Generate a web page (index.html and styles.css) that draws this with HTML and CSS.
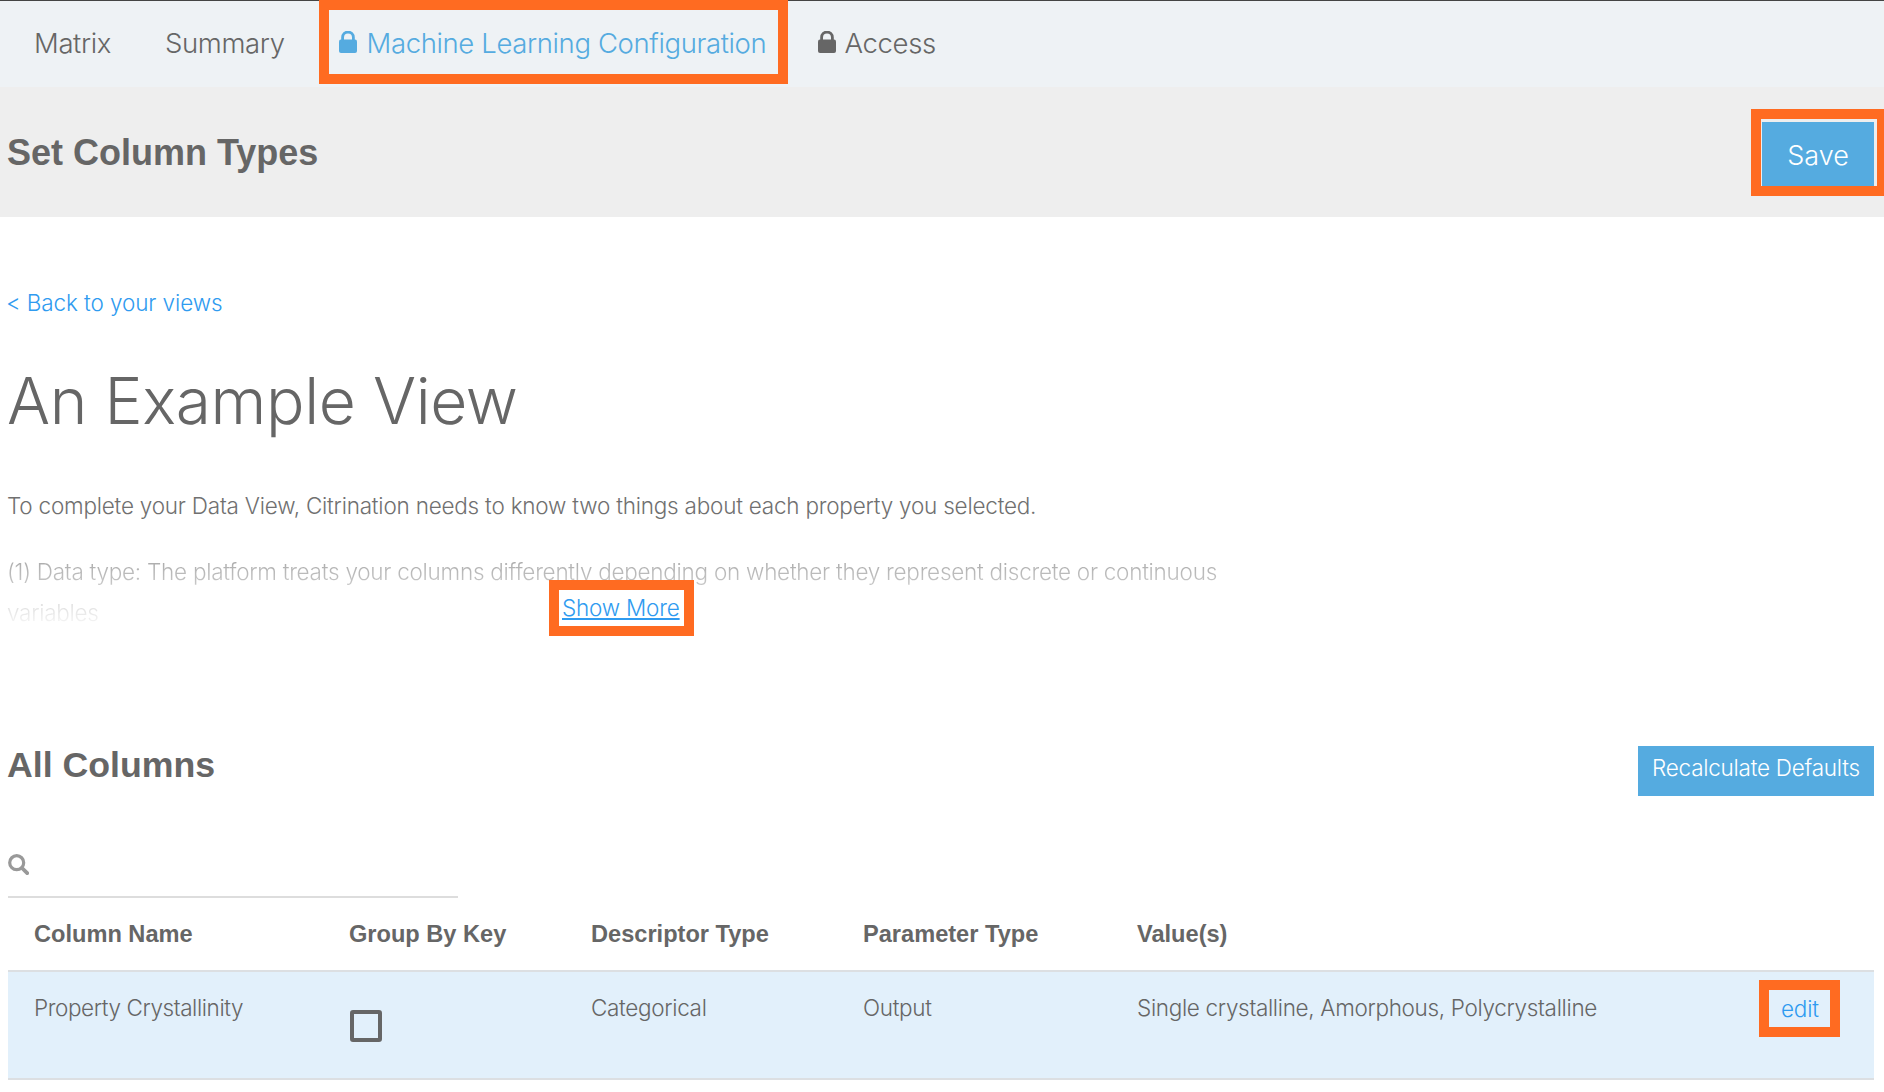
FILE: index.html
```html
<!DOCTYPE html>
<html lang="en">
<head>
<meta charset="utf-8">
<title>Set Column Types</title>
<link rel="stylesheet" href="styles.css">
</head>
<body>
<nav class="tabs">
  <a class="tab tab-matrix">Matrix</a>
  <a class="tab tab-summary">Summary</a>
  <div class="mark mark-tab">
    <a class="tab tab-active">
      <svg class="lock" viewBox="0 0 18 22" aria-hidden="true"><path d="M3.6 10V6.4a5.4 5.4 0 0 1 10.8 0V10" fill="none" stroke="currentColor" stroke-width="2.8"/><rect x="0" y="8.5" width="18" height="13.5" rx="2" fill="currentColor"/></svg>
      Machine Learning Configuration
    </a>
  </div>
  <a class="tab tab-access">
    <svg class="lock" viewBox="0 0 18 22" aria-hidden="true"><path d="M3.6 10V6.4a5.4 5.4 0 0 1 10.8 0V10" fill="none" stroke="currentColor" stroke-width="2.8"/><rect x="0" y="8.5" width="18" height="13.5" rx="2" fill="currentColor"/></svg>
    Access
  </a>
</nav>

<header class="subheader">
  <h2 class="section-title">Set Column Types</h2>
  <div class="mark mark-save"><button class="btn btn-save">Save</button></div>
</header>

<main class="content">
  <a class="back-link">&lt; Back to your views</a>
  <h1 class="page-title">An Example View</h1>
  <p class="lead">To complete your Data View, Citrination needs to know two things about each property you selected.</p>
  <div class="more-wrap">
    <p class="faded">(1) Data type: The platform treats your columns differently depending on whether they represent discrete or continuous variables</p>
    <div class="mark mark-more"><a class="show-more">Show More</a></div>
  </div>

  <div class="columns-head">
    <h2 class="section-title section-title-small">All Columns</h2>
    <button class="btn btn-recalc">Recalculate Defaults</button>
  </div>

  <div class="search">
    <svg class="search-icon" viewBox="0 0 21 21" aria-hidden="true"><circle cx="8.7" cy="8.7" r="7" fill="none" stroke="currentColor" stroke-width="3.2"/><path d="M14 14l5.2 5.2" stroke="currentColor" stroke-width="3.8" stroke-linecap="round"/></svg>
  </div>

  <div class="grid grid-head">
    <div>Column Name</div>
    <div>Group By Key</div>
    <div>Descriptor Type</div>
    <div>Parameter Type</div>
    <div>Value(s)</div>
    <div></div>
  </div>
  <div class="grid grid-row">
    <div class="cell cell-name">Property Crystallinity</div>
    <div class="cell"><span class="checkbox"></span></div>
    <div class="cell">Categorical</div>
    <div class="cell">Output</div>
    <div class="cell">Single crystalline, Amorphous, Polycrystalline</div>
    <div class="mark mark-edit"><a class="edit">edit</a></div>
  </div>
</main>
</body>
</html>
```
FILE: styles.css
```css
* { box-sizing: border-box; }
html, body { margin: 0; padding: 0; }
body {
  font-family: Inter, "Liberation Sans", Arial, sans-serif;
  font-weight: 300;
  color: #666;
  background: #fff;
  overflow: hidden;
}
a { display: block; }
.mark { border: 10px solid #ff6b21; }

.tabs {
  display: flex;
  align-items: flex-start;
  height: 87px;
  background: #eef2f5;
  box-shadow: inset 0 1px #444;
  font-size: 27.5px;
  letter-spacing: -0.38px;
  color: #666;
}
.tab { line-height: 64px; margin-top: 11px; white-space: nowrap; display: flex; align-items: center; }
.tab-matrix { margin-left: 34px; }
.tab-summary { margin-left: 54px; margin-right: 34px; }
.mark-tab { flex: 0 0 469px; height: 84px; }
.tab-active { margin: 1px 0 0 10px; color: #55abe0; gap: 10px; }
.tab-access { margin-left: 30px; gap: 9px; }
.lock { flex: 0 0 18px; height: 22px; margin-top: -3px; }

.subheader {
  display: flex;
  justify-content: space-between;
  align-items: center;
  height: 130px;
  padding-left: 7px;
  background: #eee;
}
.section-title { margin: 0; font-family: "Liberation Sans", Arial, sans-serif; font-size: 36px; line-height: 38px; font-weight: 700; color: #666; }
.subheader .section-title { margin-top: 2px; }
.section-title-small { margin: 0 0 0 -1px; font-size: 35.7px; }
.mark-save { border-right-width: 7px; padding: 3px 3px 0 1px; height: 87px; }
.btn {
  display: block;
  border: 0;
  padding: 0;
  background: #55abe0;
  color: #fff;
  font-family: inherit;
  font-weight: 300;
}
.btn-save { width: 112px; height: 64px; font-size: 27px; padding-top: 4px; }

.content { padding: 0 10px 0 8px; }
.back-link { margin: 71px 0 0 -2px; font-size: 22.5px; letter-spacing: -0.1px; line-height: 30px; color: #2f9bf0; }
.page-title { margin: 43px 0 0 -1px; font-size: 64px; line-height: 80px; font-weight: 300; letter-spacing: -0.4px; color: #666; }
.lead { margin: 44px 0 0 -1px; font-size: 22.5px; letter-spacing: -0.22px; line-height: 41px; color: #707070; }

.more-wrap { position: relative; margin: 25px 0 0 -1px; width: 1240px; }
.faded {
  margin: 0;
  font-size: 22.5px;
  letter-spacing: -0.26px;
  line-height: 41px;
  color: transparent;
  background: linear-gradient(#a0a0a0, #ededed 80%, #fff);
  -webkit-background-clip: text;
  background-clip: text;
}
.mark-more { position: absolute; left: 542px; top: 29px; width: 145px; height: 56px; background: #fff; }
.show-more { padding-left: 3px; font-size: 22.5px; letter-spacing: -0.2px; line-height: 36px; color: #2f9bf0; text-decoration: underline; white-space: nowrap; }

.columns-head { display: flex; justify-content: space-between; align-items: flex-start; margin-top: 113px; }
.btn-recalc { width: 236px; height: 50px; font-size: 22.5px; letter-spacing: -0.25px; padding-bottom: 8px; }

.search { width: 450px; height: 52px; margin-top: 50px; padding-top: 8px; border-bottom: 2px solid #ddd; color: #999; }
.search-icon { display: block; width: 21px; height: 21px; }

.grid { display: grid; grid-template-columns: 315px 242px 272px 274px 1fr auto; padding: 0 34px 0 26px; }
.grid-head { height: 72px; align-items: center; font-family: "Liberation Sans", Arial, sans-serif; font-size: 23.6px; font-weight: 700; color: #666; }
.grid-row {
  height: 110px;
  background: #e2f0fb;
  border-top: 2px solid #dcdfe2;
  border-bottom: 2px solid #dcdfe2;
  font-size: 22.5px;
  letter-spacing: -0.33px;
  color: #666;
}
.cell { padding-top: 21px; line-height: 30px; }
.cell-name { letter-spacing: -0.42px; }
.checkbox { display: block; width: 32px; height: 32px; margin: 17px 0 0 1px; border: 4px solid #666; border-radius: 3px; }
.mark-edit { width: 81px; height: 57px; margin-top: 8px; }
.edit { padding-left: 12px; font-size: 22.5px; letter-spacing: -0.2px; line-height: 37px; color: #2f9bf0; }
```
